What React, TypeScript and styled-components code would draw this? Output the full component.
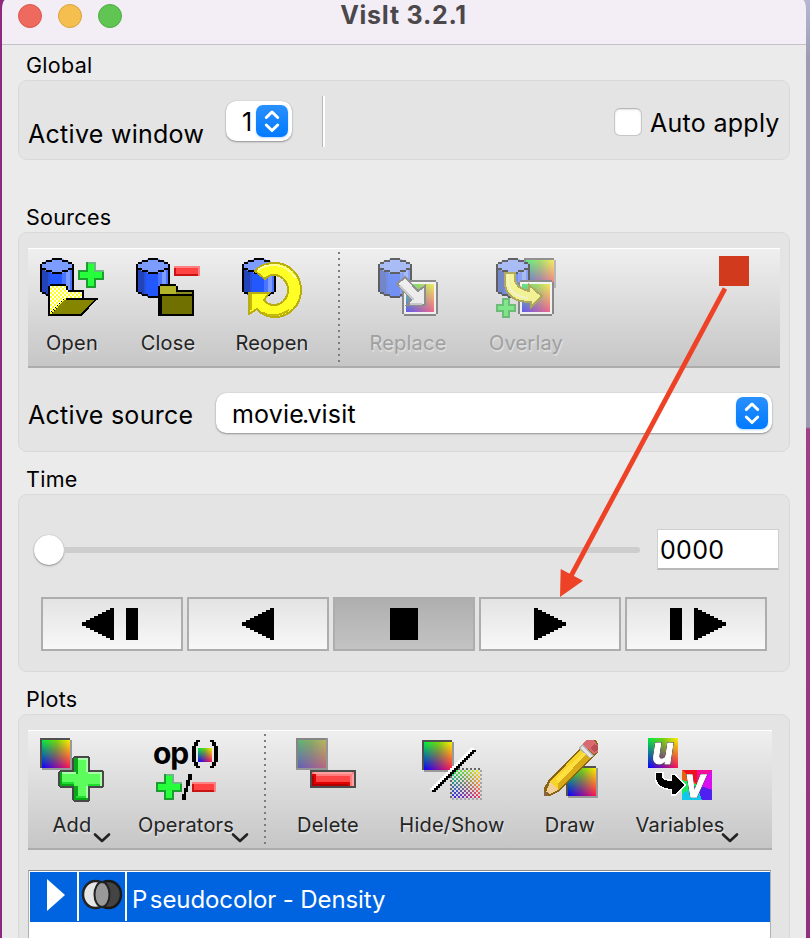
import React, { useId } from 'react';
import styled, { createGlobalStyle, css } from 'styled-components';

const GlobalStyle = createGlobalStyle`
  * { box-sizing: border-box; }
  html, body { margin: 0; padding: 0; overflow: hidden; }
  body { font-family: Inter, 'Liberation Sans', sans-serif; color: #000; }
  svg { display: block; flex: none; }
`;

/* ---------- window ---------- */

const Desktop = styled.div`
  position: relative;
  width: 810px;
  height: 938px;
  padding: 0 4px 0 2px;
  overflow: hidden;
  background: linear-gradient(90deg, #8d2a80 0 400px, transparent 400px),
    linear-gradient(180deg, #b4b6d4 0, #9d9bb2 60px, #9c9ab0 427px, #a03f86 429px, #92307f 938px);
`;

const Window = styled.main`
  height: 938px;
  display: flex;
  flex-direction: column;
  background: #ebebeb;
  border-radius: 3px 3px 0 0 / 12px 12px 0 0;
  overflow: hidden;
`;

const TitleBar = styled.header`
  flex: none;
  height: 45px;
  display: grid;
  grid-template-columns: 130px 1fr 130px;
  padding-left: 16px;
  background: #f3edf5;
  border-bottom: 1px solid #c4c2c8;
`;

const TrafficLights = styled.div`
  display: flex;
  gap: 16px;
  padding-top: 4px;
`;

const Light = styled.span<{ $fill: string; $edge: string }>`
  width: 24px;
  height: 24px;
  border-radius: 50%;
  background: ${(p) => p.$fill};
  border: 1px solid ${(p) => p.$edge};
`;

const Title = styled.h1`
  margin: 0;
  text-align: center;
  font-size: 25px;
  font-weight: 700;
  line-height: 30px;
  letter-spacing: 0.75px;
  color: #4b484c;
  padding-right: 17px;
`;

const Content = styled.div`
  display: flex;
  flex-direction: column;
  padding: 0 16px;
`;

/* ---------- groups ---------- */

const Group = styled.section<{ $top: number }>`
  display: flex;
  flex-direction: column;
  margin-top: ${(p) => p.$top}px;
`;

const GroupTitle = styled.h2`
  margin: 0;
  height: 28px;
  padding-left: 8px;
  font-size: 21.5px;
  font-weight: 400;
  line-height: 26px;
  letter-spacing: 0.3px;
`;

const GroupBox = styled.div<{ $height: number }>`
  height: ${(p) => p.$height}px;
  display: flex;
  flex-direction: column;
  border: 1px solid #d9d9d9;
  border-radius: 9px;
  background: #e4e4e4;
`;

const GlobalRow = styled.div`
  display: flex;
  align-items: flex-start;
  height: 78px;
  padding: 15px 10px 0 9px;
`;

const FieldLabel = styled.label<{ $w: number; $drop?: number }>`
  width: ${(p) => p.$w}px;
  margin-top: ${(p) => p.$drop ?? 0}px;
  font-size: 25px;
  line-height: 40px;
  letter-spacing: 0.28px;
  white-space: nowrap;
`;

const Select = styled.div<{ $w: number; $drop?: number }>`
  width: ${(p) => p.$w}px;
  height: 40px;
  margin-top: ${(p) => p.$drop ?? 0}px;
  padding: 0 4px 0 16px;
  display: flex;
  align-items: center;
  justify-content: space-between;
  font-size: 25px;
  line-height: 40px;
  letter-spacing: 0.18px;
  background: #fff;
  border-radius: 10px;
  box-shadow: 0 1px 2px rgba(0, 0, 0, 0.35), 0 0 1px rgba(0, 0, 0, 0.25);
`;

const SelectValue = styled.span`
  padding-top: 2px;
`;

const SelectArrows = styled.span`
  width: 32px;
  height: 32px;
  border-radius: 7px;
  background: linear-gradient(#2a90fd, #007aff);
  box-shadow: 0 1px 2px rgba(0, 122, 255, 0.3);
`;

const Tight = styled.span`
  margin: 0 -2px 0 -2px;
`;

const Divider = styled.div`
  width: 3px;
  height: 51px;
  margin: 0 auto 0 30px;
  border-left: 1px solid #b8b8b8;
  background: #fff;
`;

const Checkbox = styled.span`
  width: 28px;
  height: 28px;
  margin: 12px 8px 0 0;
  border: 1px solid #c6c6c6;
  border-top-color: #b6b6b6;
  border-radius: 6px;
  background: #fff;
  box-shadow: inset 0 1px 2px rgba(0, 0, 0, 0.12);
`;

/* ---------- toolbars ---------- */

const ToolBar = styled.div<{ $w: number; $top: number }>`
  flex: none;
  display: flex;
  width: ${(p) => p.$w}px;
  height: 120px;
  margin: ${(p) => p.$top}px 0 0 9px;
  border-top: 1px solid #fff;
  border-bottom: 2px solid #acacac;
  background: linear-gradient(#efefef, #c6c6c6);
`;

const ToolButton = styled.div<{ $w: number; $disabled?: boolean }>`
  position: relative;
  width: ${(p) => p.$w}px;
  display: flex;
  flex-direction: column;
  align-items: center;
  padding-top: 7px;
  color: #242424;
  ${(p) =>
    p.$disabled &&
    css`
      color: #a0a0a0;
      svg { opacity: 0.58; }
    `}
`;

const ToolLabel = styled.span`
  margin: 8px 0 0;
  font-size: 20px;
  line-height: 30px;
  letter-spacing: 0.2px;
  white-space: nowrap;
  text-shadow: 1px 2px 1px rgba(255, 255, 255, 0.4);
`;

const MenuMark = styled.span<{ $right: number }>`
  position: absolute;
  right: ${(p) => p.$right}px;
  top: 101px;
`;

const ToolSeparator = styled.div<{ $w: number }>`
  width: ${(p) => p.$w}px;
  display: flex;
  justify-content: center;
  padding: 3px 0 4px;
  &::before {
    content: '';
    width: 2px;
    background: repeating-linear-gradient(#7d7d7d 0 2px, transparent 2px 6px);
  }
`;

const StopBadge = styled.span`
  width: 30px;
  height: 30px;
  margin: 7px 31px 0 auto;
  background: #d23a1e;
`;

const SourceRow = styled.div`
  display: flex;
  padding: 25px 17px 0 9px;
`;

/* ---------- time ---------- */

const SliderRow = styled.div`
  display: flex;
  align-items: center;
  height: 42px;
  margin-top: 34px;
  padding: 0 10px 0 15px;
`;

const Slider = styled.div`
  display: flex;
  align-items: center;
  width: 606px;
  margin-right: 17px;
`;

const Knob = styled.span`
  width: 30px;
  height: 30px;
  border-radius: 50%;
  background: #fff;
  box-shadow: 0 1px 2px rgba(0, 0, 0, 0.35), 0 0 1px rgba(0, 0, 0, 0.25);
`;

const Groove = styled.span`
  flex: 1;
  height: 6px;
  border-radius: 0 3px 3px 0;
  background: #cdcdcd;
`;

const FrameField = styled.div`
  width: 122px;
  height: 41px;
  margin-bottom: 2px;
  padding-left: 2px;
  border: 1px solid #cfcfcf;
  border-bottom: 2px solid #b9b9b9;
  background: #fff;
  font-size: 25px;
  line-height: 40px;
  letter-spacing: 0.3px;
`;

const Transport = styled.div`
  display: flex;
  gap: 4px;
  margin: 26px 0 0 22px;
`;

const TransportButton = styled.button<{ $active?: boolean }>`
  width: 142px;
  height: 54px;
  padding: 0;
  display: flex;
  align-items: center;
  justify-content: center;
  border: 2px solid #adadad;
  background: ${(p) =>
    p.$active ? 'linear-gradient(#afafaf, #c3c3c3)' : 'linear-gradient(#e3e3e3, #f8f8f8)'};
`;

/* ---------- plot list ---------- */

const PlotList = styled.div`
  flex: none;
  width: 743px;
  height: 200px;
  margin: 20px 0 0 9px;
  padding: 1px 0 0 1px;
  border: 1px solid #b0b0b0;
  border-top-color: #8a8a8a;
  background: #fff;
`;

const PlotRow = styled.div`
  display: grid;
  grid-template-columns: 49px 48px 1fr;
  height: 50px;
  background: #0064e1;
  color: #fff;
`;

const PlotCell = styled.div`
  display: flex;
  justify-content: center;
  height: 49px;
  padding-top: 7px;
  border-right: 2px solid #fff;
`;

const PlotName = styled.div`
  padding: 3px 0 0 5px;
  font-size: 24px;
  line-height: 50px;
  letter-spacing: -0.1px;
  white-space: nowrap;
`;

const Capital = styled.span`
  letter-spacing: 2.5px;
`;

const Pointer = styled.svg`
  position: absolute;
  left: 550px;
  top: 280px;
  pointer-events: none;
`;

/* ---------- icons, on a 32 x 32 pixel grid ---------- */

const Icon = ({ children }: { children: React.ReactNode }) => (
  <svg width="64" height="64" viewBox="0 0 32 32" shapeRendering="crispEdges" overflow="visible">
    {children}
  </svg>
);

const Drum = ({ x = 0 }: { x?: number }) => (
  <g transform={`translate(${x} 0)`}>
    <path d="M.5 5V17.5L3 19.5L6 20.5H11L14 19.5L16.5 17.5V5Z" fill="#2458ff" />
    <path d="M1 6H4V19.500L1 18Z" fill="#2344b8" />
    <path d="M4 7H5V20H4Z" fill="#2450dc" />
    <path d="M11 7H13V20H11ZM15 6H16V18H15Z" fill="#4a74ff" />
    <path d="M13 7H15V19H13Z" fill="#7d9cff" />
    <path d="M6 1.500H11L14 2.500L16 4V6L14 7.500L11 8.500H6L3 7.500L1 6V4L3 2.500Z" fill="#7d9cff" />
    <path
      d="M6 1H11V2H6ZM3 2H6V3H3ZM11 2H14V3H11ZM1 3H3V4H1ZM14 3H16V4H14ZM0 4H1V18H0ZM16 4H17V18H16ZM1 6H3V7H1ZM14 6H16V7H14ZM3 7H6V8H3ZM11 7H14V8H11ZM6 8H11V9H6ZM1 18H3V19H1ZM14 18H16V19H14ZM3 19H6V20H3ZM11 19H14V20H11ZM6 20H11V21H6Z"
      fill="#000"
    />
  </g>
);

const Spectrum = ({ x, y, s }: { x: number; y: number; s: number }) => {
  const id = useId().replace(/:/g, '');
  return (
    <g>
      <defs>
        <linearGradient id={`${id}t`}>
          <stop offset="0" stopColor="#00f03c" />
          <stop offset="0.5" stopColor="#70d810" />
          <stop offset="1" stopColor="#fff000" />
        </linearGradient>
        <linearGradient id={`${id}b`}>
          <stop offset="0" stopColor="#0a00ff" />
          <stop offset="1" stopColor="#ff1450" />
        </linearGradient>
        <linearGradient id={`${id}v`} x2="0" y2="1">
          <stop offset="0" stopColor="#000" />
          <stop offset="1" stopColor="#fff" />
        </linearGradient>
        <mask id={`${id}m`} style={{ maskType: 'luminance' }}>
          <rect x={x} y={y} width={s} height={s} fill={`url(#${id}v)`} />
        </mask>
      </defs>
      <rect x={x} y={y} width={s} height={s} fill={`url(#${id}t)`} />
      <rect x={x} y={y} width={s} height={s} fill={`url(#${id}b)`} mask={`url(#${id}m)`} />
    </g>
  );
};

const Tile = ({ x, y }: { x: number; y: number }) => (
  <g>
    <path d={`M${x + 1} ${y + 1}h15v15h-15z`} fill="#999" />
    <path d={`M${x} ${y}h15v15h-15z`} fill="#505050" />
    <Spectrum x={x + 1} y={y + 1} s={14} />
  </g>
);

const FramedTile = ({ x }: { x: number }) => (
  <g>
    <path d={`M${x + 1} 12h16v1h1v16h-1v1h-16v-1h-1v-16h1z`} fill="#4c4c4c" />
    <path d={`M${x + 1} 13h16v16h-16z`} fill="#fff" />
    <Spectrum x={x + 2} y={14} s={14} />
  </g>
);

const SmallPlus = ({ x, y }: { x: number; y: number }) => (
  <g transform={`translate(${x} ${y})`}>
    <path d="M4 0H9V4H13V9H9V13H4V9H0V4H4Z" fill="#1f9c30" />
    <path d="M5 0H9V4H13V5H8V1H5Z" fill="#66bb7d" />
    <path d="M5 1H8V5H12V8H8V12H5V8H1V5H5Z" fill="#26ff3c" />
  </g>
);

const SmallMinus = ({ x, y, w = 13 }: { x: number; y: number; w?: number }) => (
  <g transform={`translate(${x} ${y})`}>
    <path d={`M0 0H${w}V5H0Z`} fill="#c81414" />
    <path d={`M0 0H${w}V5H${w - 1}V1H0Z`} fill="#ff8080" />
    <path d={`M1 1H${w - 1}V4H1Z`} fill="#ff4242" />
  </g>
);

const OpenIcon = () => {
  const dots: React.ReactNode[] = [];
  for (let y = 15; y < 29; y++)
    for (let x = 5; x < 21; x++) {
      const inside = (y < 18 ? x < 13 : true) && (y < 21 || x < 5 + (29 - y));
      if ((x + y) % 2 && inside) dots.push(<rect key={`${x}-${y}`} x={x} y={y} width="1" height="1" fill="#ffff20" />);
    }
  return (
    <Icon>
      <Drum />
      <path d="M5 14H13V15H14V17H22V21H29V22H28L21 30H4V15H5Z" fill="#000" />
      <path d="M5 15H13V17H14V18H21V21H12L5 28Z" fill="#fff" />
      {dots}
      <path d="M12 22H27L20.500 29H6Z" fill="#858500" />
      <SmallPlus x={19} y={3} />
    </Icon>
  );
};

const CloseIcon = () => (
  <Icon>
    <Drum />
    <path d="M12 14H20V15H21V17H29V30H11V15H12Z" fill="#000" />
    <path d="M12 15H20V18H28V19H12Z" fill="#b4b428" />
    <path d="M13 20H28V29H13Z" fill="#707000" />
    <path d="M20 18H28V19H20Z" fill="#8c8c20" />
    <SmallMinus x={19} y={5} />
  </Icon>
);

const ReopenIcon = () => (
  <Icon>
    <Drum x={1} />
    <path
      d="M7.500 7.500Q11 3.500 17.500 3.500A13 13.500 0 0 1 17.500 30.500Q12 30.500 8.500 26.500L4.500 29V18.500H14.500L12 22Q14 24.500 17 24.500A7 7.500 0 0 0 17 9.500Q14 9.500 12.500 11.500Z"
      fill="#ffff26"
      stroke="#b9ad10"
    />
    <path d="M9 7Q12 4.500 17.500 4.500T28 11" fill="none" stroke="#ffff9a" />
    <path d="M11.500 28.500Q17.500 31.500 24.500 27" fill="none" stroke="#c4b80c" />
    <path d="M5.500 19V27" stroke="#c4b80c" />
  </Icon>
);

const ReplaceIcon = () => (
  <Icon>
    <Drum x={1} />
    <FramedTile x={13} />
    <path d="M10.500 14L14.500 10.500L21 17.500L24.500 15V24.500H15.500L18 21.500Z" fill="#f6f6f6" stroke="#555" />
    <path d="M12 15L19 22M17 24H23" stroke="#bbb" fill="none" />
  </Icon>
);

const OverlayIcon = () => (
  <Icon>
    <path d="M16 2H31V16H16Z" fill="#999" />
    <path d="M15 1H30V16H15Z" fill="#505050" />
    <Spectrum x={16} y={2} s={14} />
    <Drum x={1} />
    <FramedTile x={12} />
    <path
      d="M5.500 8.500H10.500V12Q11 16 17.500 17.500V14.500L24 20L18.500 25.500V23Q6.500 23 5.500 14Z"
      fill="#ffff60"
      stroke="#8a8200"
    />
    <path d="M7 9V13Q8 20 17 21" fill="none" stroke="#ffffc0" />
    <path d="M4 21H8V24H11V28H8V31H4V28H1V24H4Z" fill="#1fa832" />
    <path d="M5 22H7V25H10V27H7V30H5V27H2V25H5Z" fill="#3cf050" />
  </Icon>
);

const AddIcon = () => (
  <Icon>
    <Tile x={0} y={0} />
    <path d="M17 9H24L25 10V16H31L32 17V24L31 25H25V31L24 32H17L16 31V25H10L9 24V17L10 16H16V10Z" fill="#484848" />
    <path d="M17 10H24V17H31V24H24V31H17V24H10V17H17Z" fill="#5cfc5c" />
    <path d="M17 10H19V18H17ZM10 17H11V24H10ZM10 23H17V24H10ZM17 24H19V31H17ZM17 30H24V31H17Z" fill="#08a818" />
    <path d="M11 22H17V23H11ZM24 23H30V24H24ZM18 29H23V30H18Z" fill="#1fdc30" />
    <path d="M19 10H24V11H19ZM11 17H18V18H11ZM24 17H31V18H24ZM23 11H24V17H23ZM30 18H31V24H30ZM23 24H24V30H23Z" fill="#a8ffa8" />
  </Icon>
);

const OperatorsIcon = () => (
  <Icon>
    <text x="-0.500" y="12.900" fontFamily="Inter, sans-serif" fontSize="15" fontWeight="700" letterSpacing="-.6">op</text>
    <path d="M21 1H23V2H22V4H21V12H22V14H23V15H21V14H20V12H19V4H20V2H21ZM28 1H30V2H31V4H32V12H31V14H30V15H28V14H29V12H30V4H29V2H28Z" />
    <Spectrum x={22} y={5} s={7} />
    <SmallPlus x={1} y={18} />
    <path d="M17 18H19V21H18V24H17V27H16V31H14V28H15V25H16V21H17Z" />
    <SmallMinus x={19} y={22} w={12} />
  </Icon>
);

const DeleteIcon = () => (
  <Icon>
    <path d="M0 0H16V16H0Z" fill="#959595" />
    <path d="M0 0H15V1H1V15H0Z" fill="#858585" />
    <g opacity=".36"><Spectrum x={1} y={1} s={14} /></g>
    <path d="M7 16H30V25H7Z" fill="#4c4c4c" />
    <path d="M8 17H29V24H8Z" fill="#fc4444" />
    <path d="M8 17H29V19H8ZM27 17H29V24H27Z" fill="#ff7c7c" />
    <path d="M9 17H28V18H9ZM28 18H29V24H28Z" fill="#ffa0a0" />
    <path d="M8 18H10V24H8ZM8 22H27V24H8Z" fill="#e00000" />
    <path d="M8 23H26V24H8ZM8 19H9V24H8Z" fill="#b00000" />
  </Icon>
);

const HideShowIcon = () => {
  const id = useId().replace(/:/g, '');
  const steps = Array.from({ length: 21 }, (_, i) => i);
  return (
    <Icon>
      <defs>
        <pattern id={id} width="2" height="2" patternUnits="userSpaceOnUse">
          <path d="M0 0H1V1H0ZM1 1H2V2H1Z" fill="#fff" />
        </pattern>
        <mask id={`${id}c`}>
          <rect x="15" y="15" width="16" height="16" fill={`url(#${id})`} />
        </mask>
      </defs>
      <Tile x={1} y={1} />
      <g mask={`url(#${id}c)`} opacity=".85"><Tile x={15} y={15} /></g>
      {steps.map((i) => (
        <path key={`w${i}`} d={`M${5 + i} ${25 - i}h2v1h-2z`} fill="#fff" />
      ))}
      {steps.map((i) => (
        <path key={`b${i}`} d={`M${6 + i} ${26 - i}h2v1h-2z`} fill="#000" />
      ))}
    </Icon>
  );
};

const DrawIcon = () => (
  <Icon>
    <Tile x={14} y={14} />
    <path d="M3 29V25L6 20L22 4L24 2L26 1H29L30 3V7L28 9L10 27L6 29Z" fill="#8a6410" />
    <path d="M6 22L22 5L27 9L10 26Z" fill="#f6d428" />
    <path d="M10 21L24 7L27 9L10 26Z" fill="#d8aa18" />
    <path d="M9 20L24 6L25 7L10 23Z" fill="#ffe040" />
    <path d="M4 27L6 22L10 26L6 28Z" fill="#f0cf98" />
    <path d="M3 27H5V29H3Z" fill="#8a6440" />
    <path d="M20 5L22 3L28 9L26 10Z" fill="#b4b4b4" />
    <path d="M21 5L22 4L27 9L26 10Z" fill="#e4e4e4" />
    <path d="M22 3L24 1H28L30 4V7L28 8Z" fill="#d86a70" />
    <path d="M28 3L30 4V6L28 7L26 5Z" fill="#bc4c54" />
  </Icon>
);

const Glyph = styled.text`
  font: italic 700 16px Inter, sans-serif;
  fill: #fff;
  stroke: #fff;
  stroke-width: 0.5px;
  filter: drop-shadow(0.9px 0 0 #000) drop-shadow(0 0.9px 0 #000);
`;

const VariablesIcon = () => (
  <Icon>
    <Spectrum x={0} y={0} s={15} />
    <path d="M17 16H32V31H17Z" fill="#e020e0" />
    <path d="M17 16H24.500V23.500Z" fill="#f01020" />
    <path d="M24.500 16H32L24.500 23.500Z" fill="#f0109a" />
    <path d="M32 16V26L24.500 23.500Z" fill="#d810f0" />
    <path d="M32 26V31H27L24.500 23.500Z" fill="#5020f0" />
    <path d="M27 31H17V28L24.500 23.500Z" fill="#10c8e8" />
    <path d="M17 28V21L24.500 23.500Z" fill="#20e860" />
    <path d="M17 21V16L24.500 23.500Z" fill="#e86010" />
    <Glyph transform="translate(2 13) scale(1.08 1.22)">u</Glyph>
    <Glyph transform="translate(18.500 29.500) scale(1.06 1.28)">v</Glyph>
    <path d="M4 17.500H7V20Q8 21.500 12 21.500V18.500H13.500L18 23.500L13.500 28H12V25.500Q4 25 4 19Z" stroke="#fff" strokeWidth="1.500" paintOrder="stroke" />
  </Icon>
);

const PlotIcon = () => (
  <svg width="42" height="32" viewBox="0 0 42 32">
    <ellipse cx="14.500" cy="15.500" rx="12.500" ry="13.500" fill="#e6e6e6" stroke="#222" strokeWidth="2.500" />
    <ellipse cx="27.500" cy="15.500" rx="12.500" ry="13.500" fill="#444" stroke="#181818" strokeWidth="2.500" />
    <ellipse cx="21" cy="15.500" rx="7.500" ry="12.500" fill="#999" stroke="#222" strokeWidth="2" />
  </svg>
);

const Arrows = () => (
  <svg width="32" height="32" viewBox="0 0 32 32" fill="none" stroke="#fff" strokeWidth="3" strokeLinecap="round" strokeLinejoin="round">
    <path d="M10.300 12.500L16 7L21.700 12.500M10.300 20L16 25.500L21.700 20" />
  </svg>
);

const Chevron = () => (
  <svg width="18" height="12" viewBox="0 0 18 12" fill="none" stroke="#222" strokeWidth="2.600" strokeLinecap="round" strokeLinejoin="round">
    <path d="M2 2.500L9 9L16 2.500" />
  </svg>
);

const Steps = ({ x, back }: { x: number; back?: boolean }) => (
  <>
    {[0, 1, 2, 3, 4, 5, 6, 7].map((i) => (
      <rect key={i} x={x + i * 4} y={back ? 14 - i * 2 : i * 2} width="4" height={back ? 4 + i * 4 : 32 - i * 4} />
    ))}
  </>
);

const Transporter = ({ kind }: { kind: string }) => (
  <svg width="64" height="32" viewBox="0 0 64 32" shapeRendering="crispEdges">
    {kind === 'stepBack' && <><Steps x={2} back /><rect x="46" width="12" height="32" /></>}
    {kind === 'back' && <Steps x={16} back />}
    {kind === 'stop' && <rect x="18" width="28" height="32" />}
    {kind === 'play' && <Steps x={16} />}
    {kind === 'stepForward' && <><rect x="6" width="12" height="32" /><Steps x={30} /></>}
  </svg>
);

/* ---------- page ---------- */

export default function App() {
  return (
    <Desktop>
      <GlobalStyle />
      <Window>
        <TitleBar>
          <TrafficLights>
            <Light $fill="#ee6a5f" $edge="#d8574d" />
            <Light $fill="#f5bf4f" $edge="#d9a23c" />
            <Light $fill="#61c554" $edge="#4fab43" />
          </TrafficLights>
          <Title>VisIt 3.2.1</Title>
        </TitleBar>
        <Content>
          <Group $top={7}>
            <GroupTitle>Global</GroupTitle>
            <GroupBox $height={80}>
              <GlobalRow>
                <FieldLabel $w={198} $drop={18}>Active window</FieldLabel>
                <Select $w={66} $drop={5}>
                  <SelectValue>1</SelectValue>
                  <SelectArrows><Arrows /></SelectArrows>
                </Select>
                <Divider />
                <Checkbox />
                <FieldLabel $w={129} $drop={7}>Auto apply</FieldLabel>
              </GlobalRow>
            </GroupBox>
          </Group>

          <Group $top={44}>
            <GroupTitle>Sources</GroupTitle>
            <GroupBox $height={220}>
              <ToolBar $w={752} $top={15}>
                <ToolButton $w={88}><OpenIcon /><ToolLabel>Open</ToolLabel></ToolButton>
                <ToolButton $w={104}><CloseIcon /><ToolLabel>Close</ToolLabel></ToolButton>
                <ToolButton $w={104}><ReopenIcon /><ToolLabel>Reopen</ToolLabel></ToolButton>
                <ToolSeparator $w={30} />
                <ToolButton $w={108} $disabled><ReplaceIcon /><ToolLabel>Replace</ToolLabel></ToolButton>
                <ToolButton $w={128} $disabled><OverlayIcon /><ToolLabel>Overlay</ToolLabel></ToolButton>
                <StopBadge />
              </ToolBar>
              <SourceRow>
                <FieldLabel $w={188} $drop={2}>Active source</FieldLabel>
                <Select $w={556}>
                  <SelectValue>movie<Tight>.</Tight>visit</SelectValue>
                  <SelectArrows><Arrows /></SelectArrows>
                </Select>
              </SourceRow>
            </GroupBox>
          </Group>

          <Group $top={14}>
            <GroupTitle>Time</GroupTitle>
            <GroupBox $height={178}>
              <SliderRow>
                <Slider><Knob /><Groove /></Slider>
                <FrameField>0000</FrameField>
              </SliderRow>
              <Transport>
                <TransportButton><Transporter kind="stepBack" /></TransportButton>
                <TransportButton><Transporter kind="back" /></TransportButton>
                <TransportButton $active><Transporter kind="stop" /></TransportButton>
                <TransportButton><Transporter kind="play" /></TransportButton>
                <TransportButton><Transporter kind="stepForward" /></TransportButton>
              </Transport>
            </GroupBox>
          </Group>

          <Group $top={14}>
            <GroupTitle>Plots</GroupTitle>
            <GroupBox $height={400}>
              <ToolBar $w={744} $top={15}>
                <ToolButton $w={88}><AddIcon /><ToolLabel>Add</ToolLabel><MenuMark $right={5}><Chevron /></MenuMark></ToolButton>
                <ToolButton $w={140}><OperatorsIcon /><ToolLabel>Operators</ToolLabel><MenuMark $right={7}><Chevron /></MenuMark></ToolButton>
                <ToolSeparator $w={18} />
                <ToolButton $w={108}><DeleteIcon /><ToolLabel>Delete</ToolLabel></ToolButton>
                <ToolButton $w={140}><HideShowIcon /><ToolLabel>Hide/Show</ToolLabel></ToolButton>
                <ToolButton $w={96}><DrawIcon /><ToolLabel>Draw</ToolLabel></ToolButton>
                <ToolButton $w={124}><VariablesIcon /><ToolLabel>Variables</ToolLabel><MenuMark $right={3}><Chevron /></MenuMark></ToolButton>
              </ToolBar>
              <PlotList>
                <PlotRow>
                  <PlotCell>
                    <svg width="14" height="32" viewBox="0 0 14 32" overflow="visible"><path d="M0 0L18 16L0 32Z" fill="#fff" /></svg>
                  </PlotCell>
                  <PlotCell><PlotIcon /></PlotCell>
                  <PlotName><Capital>P</Capital>seudocolor - Density</PlotName>
                </PlotRow>
              </PlotList>
            </GroupBox>
          </Group>
        </Content>
      </Window>
      <Pointer width="200" height="330" viewBox="550 280 200 330">
        <path d="M725 288.500L571 576" stroke="#ee4226" strokeWidth="4.800" />
        <path d="M560.700 569L583 580.700L560 597Z" fill="#ee4226" />
      </Pointer>
    </Desktop>
  );
}
